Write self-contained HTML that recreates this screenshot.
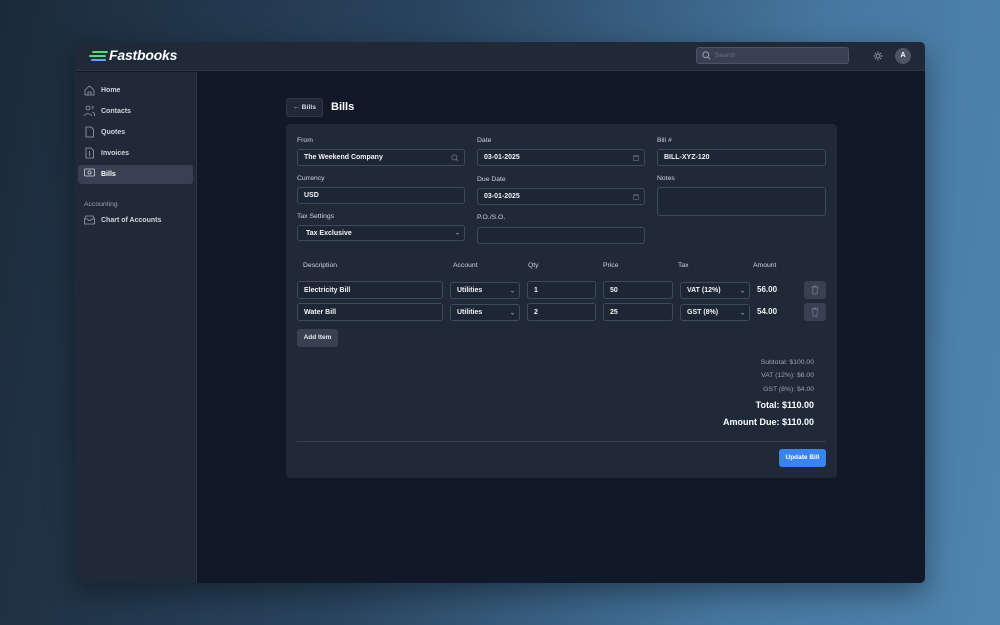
<!DOCTYPE html>
<html><head><meta charset="utf-8"><style>
*{box-sizing:border-box;margin:0;padding:0}
body{width:1000px;height:625px;overflow:hidden;font-family:"Liberation Sans",sans-serif;background:linear-gradient(100deg,#1b2a3a 0%,#2a4560 40%,#4677a0 75%,#5085b0 100%);position:relative;color:#e5e7eb}
.a{position:absolute}
.win{left:75px;top:42px;width:850px;height:541px;background:#111827;border-radius:5px;overflow:hidden;box-shadow:0 10px 30px rgba(0,0,0,.4)}
.hdr{left:0;top:0;width:850px;height:29px;background:#1f2937;border-bottom:1px solid #2c3644}
.side{left:0;top:30px;width:122px;height:511px;background:#1f2937;border-right:1px solid #2c3644}
.nav{font-size:7px;color:#d1d5db;font-weight:bold}
.lbl{font-size:6.8px;color:#d1d5db}
.inp{background:#1d2634;border:1px solid #3f4a5a;border-radius:3px;font-size:7px;color:#f3f4f6;font-weight:bold;padding-left:6px;display:flex;align-items:center}
.chev{position:absolute;right:4px;top:50%;transform:translateY(-50%);font-size:6px;color:#9ca3af}
.cal{position:absolute;right:5px;top:5px;width:6px;height:6px;border:1px solid #4b5563;border-top-width:2px;border-radius:1px}
.tr{font-size:6.8px;color:#9ca3af;text-align:right;right:0}
</style></head><body>
<div class="a win">
 <div class="a hdr">
  <svg class="a" style="left:14px;top:8px" width="20" height="12" viewBox="0 0 20 12"><rect x="3" y="1" width="16" height="2" rx="1" fill="#4ade80"/><rect x="0" y="5" width="17" height="2" rx="1" fill="#4ade80"/><rect x="2" y="9" width="15" height="2" rx="1" fill="#60a5fa"/></svg>
  <div class="a" style="left:34px;top:5px;font-size:14px;font-weight:bold;font-style:italic;color:#fff;letter-spacing:-.2px">Fastbooks</div>
  <div class="a" style="left:621px;top:5px;width:153px;height:17px;background:#374151;border:1px solid #4b5563;border-radius:3px"></div>
  <svg class="a" style="left:627px;top:9px" width="9" height="9" viewBox="0 0 10 10"><circle cx="4.2" cy="4.2" r="3.2" fill="none" stroke="#9ca3af" stroke-width="1.1"/><path d="M6.6 6.6L9 9" stroke="#9ca3af" stroke-width="1.1"/></svg>
  <div class="a" style="left:640px;top:10px;font-size:6.5px;color:#6b7280">Search</div>
  <svg class="a" style="left:798px;top:9px" width="10" height="10" viewBox="0 0 10 10"><circle cx="5" cy="5" r="2" fill="none" stroke="#9ca3af" stroke-width=".9"/><path d="M5 0.5v1.5M5 8v1.5M0.5 5h1.5M8 5h1.5M1.8 1.8l1 1M7.2 7.2l1 1M1.8 8.2l1-1M7.2 2.8l1-1" stroke="#9ca3af" stroke-width=".9"/></svg>
  <div class="a" style="left:820px;top:6px;width:16px;height:16px;border-radius:50%;background:#4b5563;font-size:7px;font-weight:bold;color:#fff;text-align:center;line-height:16px">A</div>
 </div>
 <div class="a side">
  <div class="a" style="left:3px;top:93px;width:115px;height:19px;background:#374151;border-radius:3px"></div>
  <svg class="a" style="left:9px;top:13px" width="11" height="100" viewBox="0 0 11 100" fill="none" stroke="#9ca3af" stroke-width=".8">
   <path d="M1 5L5.5 1 10 5V10H1Z M4 10V7h3v3"/>
   <circle cx="4" cy="23" r="2"/><path d="M0.5 31c0-3 7-3 7 0M8 21a1.6 1.6 0 010 3M8.5 27c2 .5 2 2 2 4"/>
   <path d="M2 42h5l2.5 2.5V52H2Z"/>
   <path d="M2 63h5l2.5 2.5V73H2Z M5.5 66v5"/>
   <rect x="0.5" y="84" width="10" height="7" rx="1" stroke="#d1d5db"/><circle cx="5.5" cy="87.5" r="1.6" stroke="#d1d5db"/>
  </svg>
  <div class="a nav" style="left:26px;top:15px">Home</div>
  <div class="a nav" style="left:26px;top:36px">Contacts</div>
  <div class="a nav" style="left:26px;top:57px">Quotes</div>
  <div class="a nav" style="left:26px;top:78px">Invoices</div>
  <div class="a nav" style="left:26px;top:99px;color:#fff">Bills</div>
  <div class="a" style="left:9px;top:129px;font-size:6.8px;color:#9ca3af">Accounting</div>
  <svg class="a" style="left:9px;top:143px" width="11" height="10" viewBox="0 0 11 10" fill="none" stroke="#9ca3af" stroke-width=".8"><path d="M0.5 4L2 1h7l1.5 3v5h-10Z M0.5 4h3l1 1.5h2l1-1.5h3"/></svg>
  <div class="a nav" style="left:26px;top:145px">Chart of Accounts</div>
 </div>
</div>
<div class="a" style="left:286px;top:98px;width:37px;height:19px;background:#1f2937;border:1px solid #2f3a4a;border-radius:3px;font-size:6.8px;font-weight:bold;color:#d1d5db;line-height:17px;text-align:center">← Bills</div>
<div class="a" style="left:331px;top:101px;font-size:11px;font-weight:bold;color:#fff">Bills</div>
<div class="a" style="left:286px;top:124px;width:551px;height:354px;background:#1f2937;border-radius:4px"></div>
<div class="a lbl" style="left:297px;top:137px">From</div>
<div class="a inp" style="left:297px;top:149px;width:168px;height:17px">The Weekend Company<svg class="a" style="right:5px;top:4px" width="8" height="8" viewBox="0 0 10 10"><circle cx="4.2" cy="4.2" r="3.2" fill="none" stroke="#6b7280" stroke-width="1"/><path d="M6.6 6.6L9 9" stroke="#6b7280"/></svg></div>
<div class="a lbl" style="left:477px;top:137px">Date</div>
<div class="a inp" style="left:477px;top:149px;width:168px;height:17px">03-01-2025<span class="cal"></span></div>
<div class="a lbl" style="left:657px;top:137px">Bill #</div>
<div class="a inp" style="left:657px;top:149px;width:169px;height:17px">BILL-XYZ-120</div>
<div class="a lbl" style="left:297px;top:175px">Currency</div>
<div class="a inp" style="left:297px;top:187px;width:168px;height:17px">USD</div>
<div class="a lbl" style="left:477px;top:176px">Due Date</div>
<div class="a inp" style="left:477px;top:188px;width:168px;height:17px">03-01-2025<span class="cal"></span></div>
<div class="a lbl" style="left:657px;top:175px">Notes</div>
<div class="a inp" style="left:657px;top:187px;width:169px;height:29px"></div>
<div class="a lbl" style="left:297px;top:213px">Tax Settings</div>
<div class="a inp" style="left:297px;top:225px;width:168px;height:16px">&nbsp;Tax Exclusive<span class="chev">⌄</span></div>
<div class="a lbl" style="left:477px;top:214px">P.O./S.O.</div>
<div class="a inp" style="left:477px;top:227px;width:168px;height:17px"></div>
<div class="a lbl" style="left:303px;top:262px">Description</div>
<div class="a lbl" style="left:453px;top:262px">Account</div>
<div class="a lbl" style="left:528px;top:262px">Qty</div>
<div class="a lbl" style="left:603px;top:262px">Price</div>
<div class="a lbl" style="left:678px;top:262px">Tax</div>
<div class="a lbl" style="left:753px;top:262px">Amount</div>

<div class="a inp" style="left:297px;top:281px;width:146px;height:18px">Electricity Bill</div>
<div class="a inp" style="left:450px;top:282px;width:70px;height:17px">Utilities<span class="chev">⌄</span></div>
<div class="a inp" style="left:527px;top:281px;width:69px;height:18px">1</div>
<div class="a inp" style="left:603px;top:281px;width:70px;height:18px">50</div>
<div class="a inp" style="left:680px;top:282px;width:70px;height:17px">VAT (12%)<span class="chev">⌄</span></div>
<div class="a" style="left:757px;top:285px;font-size:8px;font-weight:bold;color:#f3f4f6">56.00</div>
<div class="a" style="left:804px;top:281px;width:22px;height:18px;background:#374151;border-radius:3px"></div>

<div class="a inp" style="left:297px;top:303px;width:146px;height:18px">Water Bill</div>
<div class="a inp" style="left:450px;top:304px;width:70px;height:17px">Utilities<span class="chev">⌄</span></div>
<div class="a inp" style="left:527px;top:303px;width:69px;height:18px">2</div>
<div class="a inp" style="left:603px;top:303px;width:70px;height:18px">25</div>
<div class="a inp" style="left:680px;top:304px;width:70px;height:17px">GST (8%)<span class="chev">⌄</span></div>
<div class="a" style="left:757px;top:307px;font-size:8px;font-weight:bold;color:#f3f4f6">54.00</div>
<div class="a" style="left:804px;top:303px;width:22px;height:18px;background:#374151;border-radius:3px"></div>
<svg class="a" style="left:811px;top:285px" width="8" height="32" viewBox="0 0 8 32" fill="none" stroke="#6b7280" stroke-width=".9"><path d="M0.5 2h7M3 2V1h2v1M1.5 2l.5 7h4l.5-7"/><path d="M0.5 24h7M3 24v-1h2v1M1.5 24l.5 7h4l.5-7"/></svg>

<div class="a" style="left:297px;top:329px;width:41px;height:18px;background:#374151;border-radius:3px;font-size:6.5px;font-weight:bold;color:#e5e7eb;text-align:center;line-height:18px">Add Item</div>

<div class="a" style="left:600px;top:359px;width:214px">
 <div class="a tr" style="top:0">Subtotal: $100.00</div>
 <div class="a tr" style="top:13px">VAT (12%): $6.00</div>
 <div class="a tr" style="top:27px">GST (8%): $4.00</div>
 <div class="a tr" style="top:41px;font-size:9px;font-weight:bold;color:#fff">Total: $110.00</div>
 <div class="a tr" style="top:58px;font-size:9px;font-weight:bold;color:#fff">Amount Due: $110.00</div>
</div>
<div class="a" style="left:297px;top:441px;width:529px;height:1px;background:#374151"></div>
<div class="a" style="left:779px;top:449px;width:47px;height:18px;background:#3b82f6;border-radius:3px;font-size:6.5px;font-weight:bold;color:#fff;text-align:center;line-height:18px">Update Bill</div>
</body></html>
